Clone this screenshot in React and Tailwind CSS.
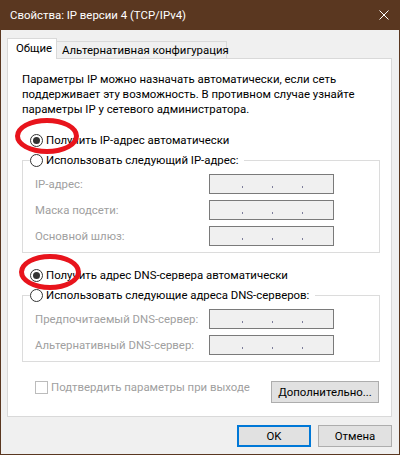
import React from "react";

const font = { fontFamily: 'Roboto, "Liberation Sans", sans-serif' };

function Radio({ checked, label, disabled }) {
  return (
    <div className="flex items-center h-[15px] gap-[3px] whitespace-nowrap">
      <span className="w-[13px] h-[13px] rounded-full border border-[#333333] bg-white flex items-center justify-center shrink-0">
        {checked && <span className="w-[7px] h-[7px] rounded-full bg-[#333333]" />}
      </span>
      <span className={disabled ? "text-[#a0a0a0]" : "text-black"}>{label}</span>
    </div>
  );
}

function IpField({ label }) {
  return (
    <div className="flex items-center h-[20px]">
      <span className="w-[174px] text-[#a0a0a0] whitespace-nowrap">{label}</span>
      <div className="w-[125px] h-[20px] border border-[#7a7a7a] bg-[#f0f0f0] flex items-start pt-[11px] pl-[32px] gap-[29px]">
        <span className="w-px h-[2px] bg-[#7d7d9a]" />
        <span className="w-px h-[2px] bg-[#7d7d9a]" />
        <span className="w-px h-[2px] bg-[#7d7d9a]" />
      </div>
    </div>
  );
}

function Group({ legend, children }) {
  return (
    <fieldset className="w-[358px] border border-[#dcdcdc] pb-[6px]">
      <legend className="ml-[7px] pr-[6px]">
        <Radio label={legend} />
      </legend>
      <div className="pl-[12px] mt-[6px] flex flex-col gap-[6px]">{children}</div>
    </fieldset>
  );
}

export default function App() {
  return (
    <div
      className="relative w-[400px] h-[455px] bg-[#f0f0f0] border-x border-b border-[#5a3720] flex flex-col text-[11.4px] leading-[15px] text-black"
      style={font}
    >
      {/* title bar */}
      <div className="h-[30px] -mx-px bg-[#5a3720] flex items-center justify-between pl-[10px] pr-[11px] text-white">
        <span>Свойства: IP версии 4 (TCP/IPv4)</span>
        <svg width="10" height="10" viewBox="0 0 10 10">
          <path d="M0.5 0.5 L9.5 9.5 M9.5 0.5 L0.5 9.5" stroke="#ffffff" strokeWidth="1" />
        </svg>
      </div>

      <div className="flex-1 pl-[6px] pr-[7px]">
        {/* tabs */}
        <div className="flex items-end mt-[8px] h-[20px] whitespace-nowrap">
          <div className="relative z-10 w-[50px] h-[21px] -mb-px bg-white border border-b-0 border-[#d9d9d9] flex items-center pl-[8px] pb-[1px]">
            Общие
          </div>
          <div className="h-[17px] w-[170px] shrink-0 border-t border-r border-[#d9d9d9] flex items-center pl-[5px]">
            Альтернативная конфигурация
          </div>
        </div>

        {/* tab page */}
        <div className="h-[359px] bg-white border border-[#d9d9d9] pl-[14px] pt-[13px] flex flex-col">
          <p className="whitespace-nowrap">
            Параметры IP можно назначать автоматически, если сеть
            <br />
            поддерживает эту возможность. В противном случае узнайте
            <br />
            параметры IP у сетевого администратора.
          </p>

          <div className="mt-[16px] ml-[8px]">
            <Radio checked label="Получить IP-адрес автоматически" />
          </div>

          <div className="mt-[5px]">
            <Group legend="Использовать следующий IP-адрес:">
              <IpField label="IP-адрес:" />
              <IpField label="Маска подсети:" />
              <IpField label="Основной шлюз:" />
            </Group>
          </div>

          <div className="mt-[15px] ml-[8px]">
            <Radio checked label="Получить адрес DNS-сервера автоматически" />
          </div>

          <div className="mt-[5px]">
            <Group legend="Использовать следующие адреса DNS-серверов:">
              <IpField label="Предпочитаемый DNS-сервер:" />
              <IpField label="Альтернативный DNS-сервер:" />
            </Group>
          </div>

          <div className="mt-[19px] flex items-start w-[357px]">
            <div className="flex items-center gap-[3px] pl-[13px] h-[13px] whitespace-nowrap">
              <span className="w-[13px] h-[13px] border border-[#bcbcbc] bg-white shrink-0" />
              <span className="text-[#a0a0a0]">Подтвердить параметры при выходе</span>
            </div>
            <button className="ml-auto w-[108px] h-[22px] border border-[#adadad] bg-[#e1e1e1] flex items-center justify-center">
              Дополнительно...
            </button>
          </div>
        </div>

        {/* dialog buttons */}
        <div className="flex justify-end gap-[7px] mt-[8px]">
          <button className="w-[74px] h-[22px] border-2 border-[#0078d7] bg-[#e1e1e1] flex items-center justify-center">
            OK
          </button>
          <button className="w-[74px] h-[22px] border border-[#adadad] bg-[#e1e1e1] flex items-center justify-center">
            Отмена
          </button>
        </div>
      </div>

      {/* hand-drawn marks */}
      <div className="absolute left-[14px] top-[118px] w-[64px] h-[36px] rounded-[50%] border-[5px] border-[#e8141c]" />
      <div className="absolute left-[18px] top-[254px] w-[62px] h-[36px] rounded-[50%] border-[5px] border-[#e8141c]" />
    </div>
  );
}
